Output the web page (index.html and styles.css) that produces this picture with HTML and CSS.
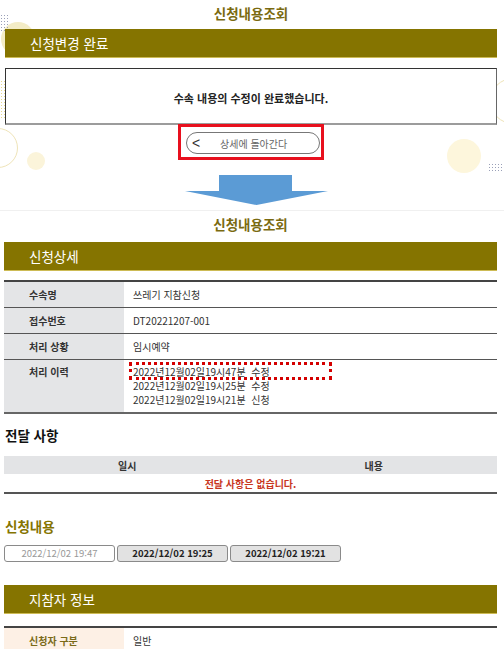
FILE: index.html
```html
<!DOCTYPE html>
<html lang="ko">
<head>
    <meta charset="UTF-8">
    <meta name="viewport" content="width=device-width, initial-scale=1.0">
    <title>신청내용조회</title>
    <link rel="stylesheet" href="styles.css">
</head>
<body>

    <!-- 변경 완료 화면 -->
    <div class="shot shot-done">
        <div class="deco deco-sun"></div>
        <div class="deco deco-dots deco-dots-tl"></div>
        <div class="deco deco-dots deco-dots-l"></div>
        <div class="deco deco-ring"></div>
        <div class="deco deco-ring deco-ring-r"></div>
        <div class="deco deco-dot-small"></div>
        <div class="deco deco-dot-big"></div>
        <div class="deco deco-dots deco-dots-r"></div>

        <h2 class="page-title">신청내용조회</h2>
        <div class="bar">신청변경 완료</div>
        <div class="msg-box">수속 내용의 수정이 완료했습니다.</div>
        <div class="back-row">
            <div class="back-mark">
                <a class="back-btn"><span class="chev">&lt;</span>상세에 돌아간다</a>
            </div>
        </div>
        <svg class="arrow" width="143" height="30" viewBox="0 0 143 30">
            <polygon points="34,0 107,0 107,16 143,16 71.5,30 0,16 34,16" fill="#5b9bd5"/>
        </svg>
    </div>

    <!-- 상세 화면 -->
    <div class="shot shot-detail">
        <h2 class="page-title">신청내용조회</h2>
        <div class="bar">신청상세</div>

        <table class="info">
            <tr><th>수속명</th><td>쓰레기 지참신청</td></tr>
            <tr><th>접수번호</th><td>DT20221207-001</td></tr>
            <tr><th>처리 상황</th><td>임시예약</td></tr>
            <tr class="history">
                <th>처리 이력</th>
                <td>
                    <div class="hl">2022년12월02일19시47분&nbsp;&nbsp;수정</div>
                    <div>2022년12월02일19시25분&nbsp;&nbsp;수정</div>
                    <div>2022년12월02일19시21분&nbsp;&nbsp;신청</div>
                </td>
            </tr>
        </table>

        <h3 class="sub-title">전달 사항</h3>
        <table class="notice">
            <thead>
                <tr><th>일시</th><th>내용</th></tr>
            </thead>
            <tbody>
                <tr><td colspan="2">전달 사항은 없습니다.</td></tr>
            </tbody>
        </table>

        <h3 class="sub-title olive">신청내용</h3>
        <div class="tabs">
            <button class="tab current">2022/12/02 19:47</button>
            <button class="tab">2022/12/02 19:25</button>
            <button class="tab">2022/12/02 19:21</button>
        </div>

        <div class="bar bar-gap">지참자 정보</div>
        <table class="info applicant">
            <tr><th>신청자 구분</th><td>일반</td></tr>
        </table>
    </div>

</body>
</html>
```

FILE: styles.css
```css
body {
    margin: 0;
    background: #fff;
    font-family: "Noto Sans CJK KR", "Noto Sans", sans-serif;
    color: #333;
}
.shot {
    position: relative;
}
.shot-done {
    height: 210px;
    padding: 0 7px 0 5px;
    overflow: hidden;
    border-bottom: 1px solid #f0f0f0;
}
.shot-detail {
    padding: 0 7px 0 4px;
}
.page-title {
    position: relative;
    margin: 0;
    text-align: center;
    font-size: 13.5px;
    line-height: 26px;
    font-weight: bold;
    color: #7a6a10;
}
.shot-done .page-title {
    margin-bottom: 3px;
}
.shot-detail .page-title {
    margin-bottom: 5px;
}
.bar {
    position: relative;
    height: 28px;
    padding-left: 25px;
    background: #857400;
    border-bottom: 1px solid #cdbb55;
    color: #fff;
    font-size: 13.5px;
    line-height: 28px;
}
.msg-box {
    position: relative;
    margin-top: 10px;
    height: 51px;
    padding-top: 3px;
    background: #fff;
    border: 1px solid #333;
    border-right-color: #666;
    border-bottom: 2px solid #9c9c9c;
    display: flex;
    align-items: center;
    justify-content: center;
    font-size: 11px;
    font-weight: bold;
    color: #222;
}
.back-row {
    position: relative;
    display: flex;
    justify-content: center;
    margin-top: -1px;
}
.back-mark {
    border: 3px solid #e8101e;
    padding: 5px 1px 3px 5px;
}
.back-btn {
    display: flex;
    align-items: center;
    width: 132px;
    height: 20px;
    border: 1px solid #777;
    border-radius: 11px;
    background: #fff;
    font-size: 10px;
    color: #666;
}
.back-btn .chev {
    width: 28px;
    padding-left: 5px;
    font-family: "Liberation Sans", sans-serif;
    font-size: 14px;
    line-height: 14px;
    color: #333;
}
.arrow {
    position: relative;
    display: block;
    margin: 15px 0 0 180px;
}

/* 배경 장식 */
.deco {
    position: absolute;
}
.deco-sun {
    left: 1px;
    top: 22px;
    width: 34px;
    height: 34px;
    border-radius: 50%;
    background: #f3ecc6;
}
.deco-dots {
    background-image: radial-gradient(#9aa0b8 0.6px, transparent 0.8px);
    background-size: 3px 3px;
}
.deco-dots-tl {
    left: 0;
    top: 14px;
    width: 10px;
    height: 18px;
}
.deco-dots-l {
    left: 0;
    top: 80px;
    width: 5px;
    height: 40px;
    background-image: radial-gradient(#e6d88a 0.7px, transparent 0.9px);
}
.deco-dots-r {
    left: 488px;
    top: 163px;
    width: 15px;
    height: 8px;
}
.deco-ring {
    left: -22px;
    top: 128px;
    width: 38px;
    height: 38px;
    border: 1px solid #efe4b8;
    border-radius: 50%;
}
.deco-ring-r {
    left: 490px;
    top: 78px;
    width: 44px;
    height: 44px;
}
.deco-dot-small {
    left: 27px;
    top: 152px;
    width: 18px;
    height: 18px;
    border-radius: 50%;
    background: #fbf4da;
}
.deco-dot-big {
    left: 447px;
    top: 139px;
    width: 34px;
    height: 34px;
    border-radius: 50%;
    background: #fdf6dc;
}

/* 표 */
.info {
    width: 100%;
    margin-top: 9px;
    border-collapse: collapse;
    border-top: 2px solid #444;
    border-bottom: 2px solid #666;
    font-size: 10px;
}
.info th,
.info td {
    height: 25px;
    padding: 0;
    border-bottom: 1px solid #555;
    text-align: left;
    line-height: 14px;
}
.info th {
    width: 95px;
    padding-left: 25px;
    background: #e4e5e7;
    font-weight: bold;
    color: #333;
}
.info td {
    padding-left: 9px;
    color: #333;
}
.history th,
.history td {
    vertical-align: top;
    padding-top: 5px;
    padding-bottom: 5px;
    height: auto;
}
.history td div {
    height: 14px;
}
.hl {
    position: relative;
}
.hl::after {
    content: "";
    position: absolute;
    left: -4px;
    top: -3px;
    width: 197px;
    height: 12px;
    border: 3px dotted #d40000;
}
.applicant {
    margin-top: 12px;
    border-bottom: none;
}
.applicant th {
    background: #fdf0e5;
    color: #7a6a18;
    border-bottom: none;
}
.applicant td {
    border-bottom: none;
}

.sub-title {
    margin: 11px 0 11px 1px;
    font-size: 13.5px;
    line-height: 20px;
    font-weight: bold;
    color: #111;
}
.sub-title.olive {
    margin-top: 22px;
    margin-bottom: 9px;
    color: #857400;
}
.notice {
    width: 100%;
    border-collapse: collapse;
    border-bottom: 2px solid #555;
    font-size: 10px;
}
.notice th {
    width: 50%;
    height: 18px;
    padding: 0;
    background: #e3e4e6;
    font-weight: bold;
    color: #333;
}
.notice td {
    height: 18px;
    padding: 0;
    text-align: center;
    font-weight: bold;
    color: #c8361e;
}

.tabs {
    display: flex;
    gap: 2px;
}
.tab {
    width: 111px;
    height: 17px;
    padding: 0;
    border: 1px solid #8a8a8a;
    border-radius: 3px;
    background: #e2e2e2;
    font-family: "Noto Sans CJK KR", sans-serif;
    font-size: 9.5px;
    line-height: 15px;
    font-weight: bold;
    color: #222;
}
.tab.current {
    background: #fff;
    color: #999;
    font-weight: normal;
}
.bar-gap {
    margin-top: 23px;
}
```
